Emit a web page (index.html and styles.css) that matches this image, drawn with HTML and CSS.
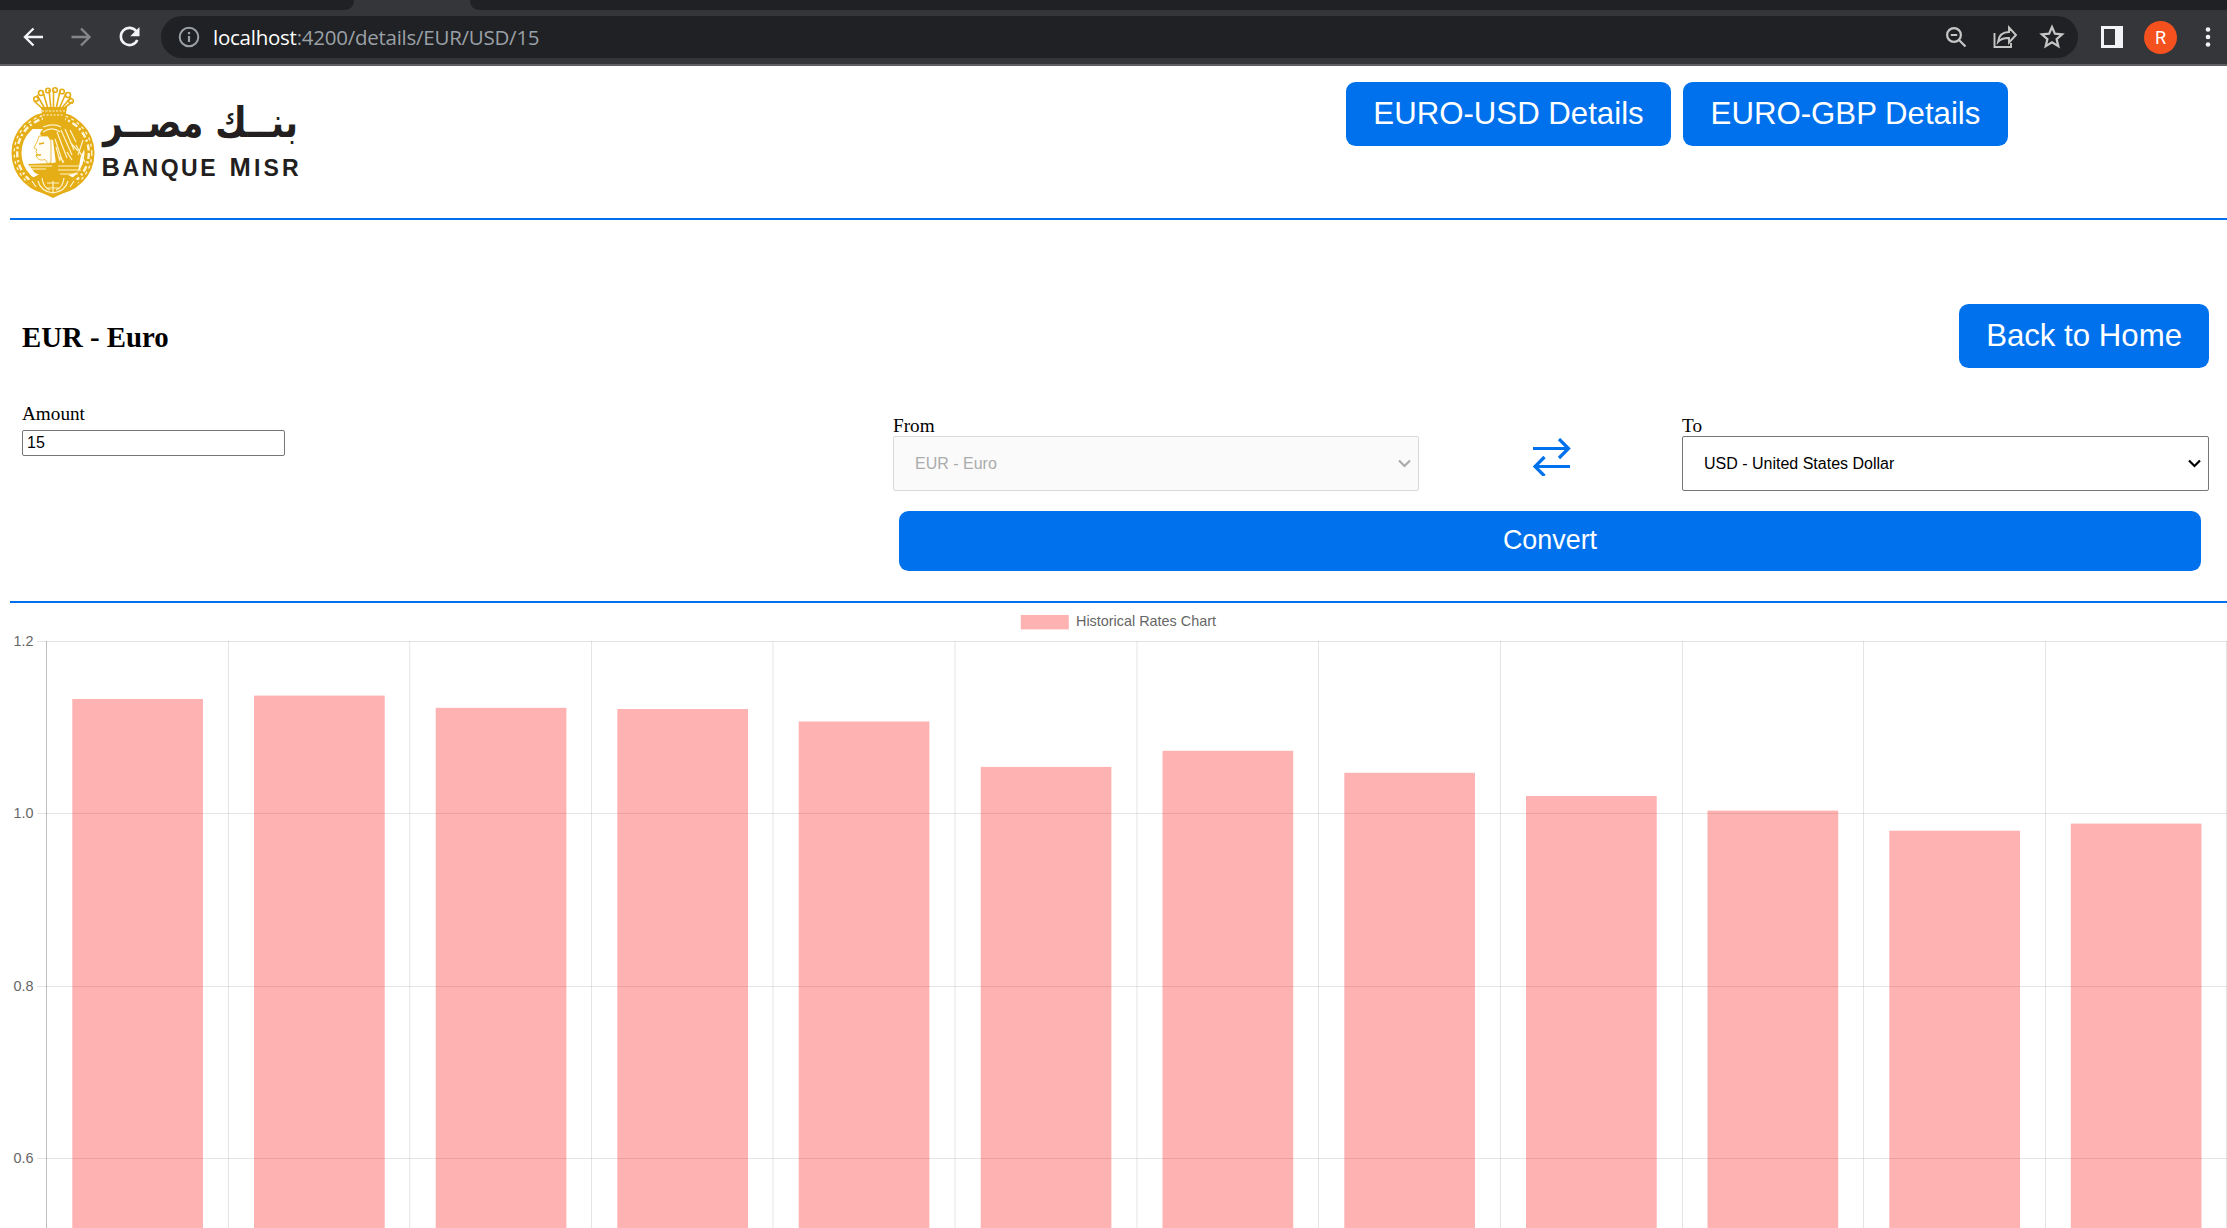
FILE: index.html
```html
<!DOCTYPE html>
<html lang="en">
<head>
<meta charset="utf-8">
<title>Banque Misr - Currency details</title>
<link rel="stylesheet" href="styles.css">
</head>
<body>
<div class="browser">
  <div class="tabs"><div class="tabs-left"></div><div class="tab-active"></div><div class="tabs-right"></div></div>
  <div class="toolbar">
    <svg class="nav" viewBox="0 0 161 54" fill="none" stroke-width="2.4">
      <g stroke="#f1f3f4"><path d="M43 27H25.5M33.5 18.5L25 27l8.500 8.500"/></g>
      <g stroke="#85868a"><path d="M71.500 27H89M81 18.500L89.500 27 81 35.500"/></g>
      <path stroke="#f1f3f4" stroke-width="2.6" d="M136.500 21.500A8.600 8.600 0 1 0 137.300 30"/>
      <path fill="#f1f3f4" d="M139.500 17v9.300h-9.300z"/>
    </svg>
    <div class="omnibox">
      <svg class="info" viewBox="0 0 22 22" fill="none" stroke="#9aa0a6" stroke-width="2"><circle cx="11" cy="11" r="9.300"/><path stroke-width="2.200" d="M11 10v6M11 6v2.300"/></svg>
      <span class="url"><b>localhost</b>:4200/details/EUR/USD/15</span>
      <svg class="actions" viewBox="0 0 122 42" fill="none" stroke="#c4c7c5" stroke-width="2.200">
        <circle cx="9" cy="19" r="6.900"/><path d="M5.800 19h6.400M14 24l6.500 6.500"/>
        <path stroke-width="1.900" d="M49.500 17v14H66v-4M53 26c.8-6.500 5-10 11-10v-4.500l7 7.500-7 7.500V22c-5-.2-8.500 1-11 4z"/>
        <path stroke-width="2.200" d="M107 11l2.900 6.700 7.200.6-5.500 4.800 1.700 7.100-6.300-3.800-6.300 3.800 1.700-7.100-5.500-4.800 7.200-.6z"/>
      </svg>
    </div>
    <svg class="panel" viewBox="0 0 22 22"><path fill="#f1f3f4" fill-rule="evenodd" d="M0 0h22v22H0zM3 3v16h11V3z"/></svg>
    <div class="avatar">R</div>
    <svg class="dots" viewBox="0 0 6 20" fill="#f1f3f4"><circle cx="3" cy="2.500" r="2.300"/><circle cx="3" cy="10" r="2.300"/><circle cx="3" cy="17.500" r="2.300"/></svg>
  </div>
</div>

<main class="page">
  <header class="header">
    <svg class="logo" viewBox="0 0 290 112">
      <g fill="none" stroke="#e5ae16">
        <g stroke-width="1.600">
          <path d="M33 22L24 14M35 22L27 8M38 22L33 5M41 22L39 3M43.500 22V3M46 22l4-18M49 22l7-16M51 22l10-12M53 22l9-7"/>
          <circle cx="26" cy="12" r="2.300"/><circle cx="31" cy="6" r="2.500"/><circle cx="38" cy="3.500" r="2.300"/><circle cx="45" cy="3" r="2.300"/><circle cx="52" cy="4.500" r="2.300"/><circle cx="58" cy="8" r="2.500"/><circle cx="61" cy="14" r="2.300"/>
        </g>
        <circle cx="43" cy="66" r="36.500" stroke-width="10"/>
        <circle cx="43" cy="66" r="35.800" stroke="#fff6d8" stroke-width="2.400" stroke-dasharray="6 2.500 2 3"/>
        <circle cx="43" cy="66" r="38.800" stroke="#fff6d8" stroke-width="1.300" stroke-dasharray="3 3.500"/>
      </g>
      <g fill="#e5ae16">
        <path d="M31 20h26l-2 13c4 4 9 6 14 9H20c5-4 8-6 13-9z"/>
        <path d="M30 47c2-9 20-15 33-8 7 5 11 14 12 22L64 82l-18-5-3-24-10-2z"/>
        <path d="M18 77l25-1 28-8-3 17-24 8-19-7z"/>
        <path d="M17 94c3 9 17 12 26 17 9-5 23-8 26-17l-16-9H33z"/>
        <circle cx="43" cy="87" r="4"/>
      </g>
      <path fill="#fffdf6" stroke="#e5ae16" stroke-width=".8" d="M29 49c-1 5-3 7-5 12l3 1.500-1 2 1 2-1 2c2 5 5 5 9 4l3 4 3-1V54l-3-5z"/>
      <g fill="none" stroke="#fff3cc" stroke-width="1.200">
        <path d="M32 24h23M33 28h21" stroke-dasharray="2 1.500"/>
        <path d="M47 45l10 26M51 43l11 25M55 42l9 21M45 52l8 24M48 69l6 6M57 65l5 8M60 55l8 9M60 43l6 12M46 60l4 14"/>
        <path d="M33 45c6-4 12-4 17 0M33 40c8-3 13-3 18 0"/>
        <path d="M66 58l9 17M73 53l-5 15"/>
        <path d="M21 82h15M48 83h23M48 79h23M20 79h22M50 87h18"/>
        <path d="M28 94c2 8 8 11 15 12 7-1 13-4 15-12M32 91c1 8 5 11 8 12M54 91c-1 8-5 11-8 12M37 96h12M37 101h12M43 94v12M22 94l4 6M64 94l-4 6"/>
      </g>
      <g stroke="#e5ae16" fill="none"><path d="M29 57l5-1M26 68h5" stroke-width="1.300"/></g>
      <text class="logo-ar" x="93" y="50" textLength="195" lengthAdjust="spacingAndGlyphs" direction="ltr">بنــك مصــر</text>
      <text class="logo-en" x="91.500" y="88.500" textLength="114" lengthAdjust="spacing">B<tspan class="sc">ANQUE</tspan></text>
      <text class="logo-en" x="219.500" y="88.500" textLength="69" lengthAdjust="spacing">M<tspan class="sc">ISR</tspan></text>
    </svg>
    <nav class="links">
      <button class="btn">EURO-USD Details</button>
      <button class="btn">EURO-GBP Details</button>
    </nav>
  </header>

  <section class="converter">
    <div class="title-row">
      <h2>EUR - Euro</h2>
      <button class="btn">Back to Home</button>
    </div>
    <div class="form">
      <label class="amount">Amount<input type="text" value="15"></label>
      <div class="currencies">
        <div class="field disabled">From<div class="select"><span>EUR - Euro</span><svg class="chev" viewBox="0 0 13 9"><path d="M1 1.500l5.500 5.500L12 1.500"/></svg></div></div>
        <svg class="swap" viewBox="0 0 38 38"><path d="M0 10.500h35M26 1l9.500 9.500L26 20M37 28.500H2M11.500 19L2 28.500l9.500 9.500"/></svg>
        <div class="field">To<div class="select"><span>USD - United States Dollar</span><svg class="chev" viewBox="0 0 13 9"><path d="M1 1.500l5.500 5.500L12 1.500"/></svg></div></div>
        <button class="btn convert">Convert</button>
      </div>
    </div>
  </section>

  <svg class="chart" viewBox="10 603 2217 625">
    <g class="grid">
      <path d="M37 641.500H2227M37 813.500H2227M37 986.500H2227M37 1158.500H2227"/>
      <path d="M228.500 641V1228M409.700 641V1228M591.500 641V1228M773 641V1228M955 641V1228M1137 641V1228M1318.500 641V1228M1500.500 641V1228M1682.500 641V1228M1863.500 641V1228M2045.500 641V1228M2226.500 641V1228"/>
      <path class="axis" d="M46.500 641V1228"/>
    </g>
    <g class="bars">
      <rect x="72.300" y="699" width="130.700" height="529"/>
      <rect x="254" y="695.600" width="130.700" height="533"/>
      <rect x="435.700" y="707.800" width="130.700" height="521"/>
      <rect x="617.300" y="709" width="130.700" height="519"/>
      <rect x="798.700" y="721.500" width="130.700" height="507"/>
      <rect x="980.700" y="766.900" width="130.700" height="462"/>
      <rect x="1162.500" y="750.800" width="130.700" height="478"/>
      <rect x="1344.300" y="772.800" width="130.700" height="456"/>
      <rect x="1526" y="796" width="130.700" height="432"/>
      <rect x="1707.500" y="810.600" width="130.700" height="418"/>
      <rect x="1889.300" y="830.700" width="130.700" height="398"/>
      <rect x="2070.800" y="823.600" width="130.700" height="405"/>
      <rect x="1020.800" y="615" width="48" height="14.400"/>
    </g>
    <g class="labels">
      <text x="1076" y="626">Historical Rates Chart</text>
      <text x="13.500" y="645.500">1.2</text><text x="13.500" y="818">1.0</text><text x="13.500" y="990.500">0.8</text><text x="13.500" y="1163">0.6</text>
    </g>
  </svg>
</main>
</body>
</html>
```
FILE: styles.css
```css
* { box-sizing: border-box; }
body { margin: 0; background: #fff; height: 1228px; overflow: hidden; font: 19.2px "Liberation Serif", serif; color: #000; }
svg { display: block; flex: none; }

.browser { height: 66px; background: #35363a; border-bottom: 2px solid #5f6064; }
.tabs { height: 10px; display: flex; }
.tabs-left, .tabs-right { background: #202124; }
.tabs-left { width: 354px; border-bottom-right-radius: 9px; }
.tab-active { width: 116px; }
.tabs-right { flex: 1; border-bottom-left-radius: 9px; }
.toolbar { height: 54px; display: flex; align-items: center; }
.nav { width: 161px; height: 54px; }
.omnibox { width: 1917px; height: 42px; border-radius: 21px; background: #202124; display: flex; align-items: center; padding: 0 15px 0 17px; }
.info { width: 22px; height: 22px; }
.url { flex: 1; margin-left: 13px; font: 20.5px "Open Sans", "Noto Sans", sans-serif; letter-spacing: -0.25px; color: #9aa0a6; }
.url b { font-weight: 400; color: #fff; }
.actions { width: 122px; height: 42px; margin-right: -4px; }
.panel { width: 22px; height: 22px; margin-left: 23px; }
.avatar { width: 33px; height: 33px; margin-left: 21px; border-radius: 50%; background: #f4511e; color: #fff; font: 18px/33px Roboto, sans-serif; text-align: center; }
.dots { width: 6px; height: 20px; margin-left: 28px; }

.page { padding-left: 10px; }
.header { height: 154px; border-bottom: 2px solid #0071ed; display: flex; justify-content: space-between; align-items: flex-start; padding: 16px 219px 0 0; }
.logo { width: 290px; height: 112px; margin-top: 5px; overflow: visible; }
.logo-ar { font: bold 42px "DejaVu Sans", sans-serif; fill: #231f20; }
.logo-en { font: bold 25.5px "Liberation Sans", sans-serif; fill: #231f20; }
.logo-en .sc { font-size: 23px; }
.links { display: flex; gap: 12px; }
.btn { height: 64px; padding: 0 27px; border: 0; border-radius: 9.6px; background: #0071ed; color: #fff; font: 31.2px "Liberation Sans", Arial, sans-serif; white-space: nowrap; }
.links .btn { width: 325px; padding: 0; }

.converter { height: 383px; padding: 84px 18px 0 12px; border-bottom: 2px solid #0071ed; }
.title-row { display: flex; justify-content: space-between; align-items: center; height: 64px; }
h2 { margin: 3px 0 0; font-size: 28.8px; line-height: 33px; }
.form { display: flex; justify-content: space-between; margin-top: 35px; line-height: 22px; }
.amount { width: 263px; display: flex; flex-direction: column; }
.amount input { width: 263px; height: 26px; margin-top: 5px; padding: 0 4px; border: 1px solid #767676; border-radius: 2px; font: 16px "Liberation Sans", Arial, sans-serif; color: #000; }
.currencies { width: 1316px; display: grid; grid-template-columns: 527px 37px 527px; justify-content: space-between; padding-top: 12px; }
.field { line-height: 21px; }
.select { height: 55px; border: 1px solid #767676; border-radius: 2px; padding: 0 7px 0 21px; display: flex; align-items: center; justify-content: space-between; font: 16px "Liberation Sans", Arial, sans-serif; }
.disabled .select { width: 526px; border-color: #dadada; background: #fafafa; color: #ababab; }
.chev { width: 13px; height: 9px; fill: none; stroke: #000; stroke-width: 2.2; }
.disabled .chev { stroke: #ababab; }
.swap { width: 38px; height: 38px; margin-top: 23px; fill: none; stroke: #0071ed; stroke-width: 3.2; }
.convert { grid-column: 1 / -1; height: 60px; margin: 20px 8px 0 6px; padding-bottom: 2px; font-size: 26.9px; }

.chart { width: 2217px; height: 625px; }
.grid { fill: none; stroke: rgba(0, 0, 0, 0.1); }
.axis { stroke: rgba(0, 0, 0, 0.25); }
.bars { fill: rgba(255, 0, 0, 0.3); }
.labels { font: 14.4px "Liberation Sans", Arial, sans-serif; fill: #666; }
```
